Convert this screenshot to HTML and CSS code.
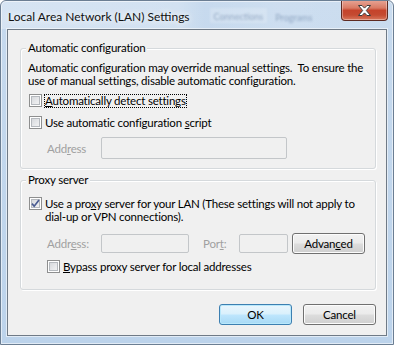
FILE: index.html
```html
<!DOCTYPE html>
<html>
<head>
<meta charset="utf-8">
<link rel="stylesheet" href="styles.css">
</head>
<body>
<div class="window">
  <div class="titlebar">
    <span class="title">Local Area Network (LAN) Settings</span>
    <span class="ghost ghost-1">Connections</span>
    <span class="ghost ghost-2">Programs</span>
    <span class="close">
      <svg width="15" height="11" viewBox="0 0 15 11"><path d="M1.5 0.5h3.5l2.5 2.6 2.5-2.6h3.5l-4.2 5 4.2 5h-3.5l-2.5-2.6-2.5 2.6h-3.5l4.2-5z" fill="#fff" stroke="#3b3b3b" stroke-width="1" stroke-linejoin="round"/></svg>
    </span>
  </div>
  <div class="client">
    <section class="group group-auto">
      <div class="legend">Automatic configuration</div>
      <p class="desc">Automatic configuration may override manual settings.&nbsp; To ensure the<br>use of manual settings, disable automatic configuration.</p>
      <div class="check-row row-1">
        <span class="cb"></span>
        <span class="cb-label focus"><u>A</u>utomatically detect settings</span>
      </div>
      <div class="check-row row-2">
        <span class="cb"></span>
        <span class="cb-label">Use automatic configuration <u>s</u>cript</span>
      </div>
      <div class="field-row field-auto">
        <span class="field-label">Add<u>r</u>ess</span>
        <span class="input input-url"></span>
      </div>
    </section>

    <section class="group group-proxy">
      <div class="legend">Proxy server</div>
      <div class="check-row row-proxy">
        <span class="cb checked">
          <svg width="9" height="9" viewBox="0 0 9 9"><path d="M1 4.6l2.2 2.6L8 1" fill="none" stroke="#4a5c92" stroke-width="1.7"/></svg>
        </span>
        <span class="cb-label two-line">Use a pro<u>x</u>y server for your LAN (These settings will not apply to<br>dial-up or VPN connections).</span>
      </div>
      <div class="field-row field-proxy">
        <span class="field-label">Addr<u>e</u>ss:</span>
        <span class="input input-addr"></span>
        <span class="field-label port-label">Por<u>t</u>:</span>
        <span class="input input-port"></span>
        <span class="btn btn-adv">Advan<u>c</u>ed</span>
      </div>
      <div class="check-row row-bypass">
        <span class="cb"></span>
        <span class="cb-label"><u>B</u>ypass proxy server for local addresses</span>
      </div>
    </section>

    <div class="buttons">
      <span class="btn btn-default">OK</span>
      <span class="btn">Cancel</span>
    </div>
  </div>
</div>
</body>
</html>
```

FILE: styles.css
```css
* { box-sizing: border-box; }

html, body {
  margin: 0;
  padding: 0;
  background: #ffffff;
}

body {
  font-family: "Lato", "Open Sans", sans-serif;
  font-size: 11.5px;
  letter-spacing: -0.2px;
  color: #000;
  white-space: nowrap;
}

u { text-decoration: underline; text-underline-offset: 1px; }

.window {
  width: 394px;
  height: 345px;
  display: flex;
  flex-direction: column;
  border: 1px solid #6b7e93;
  border-radius: 6px 6px 0 0;
  background: linear-gradient(to bottom, #c7daee 0%, #bcd3eb 100%);
  box-shadow: inset 0 0 0 1px rgba(255,255,255,0.55);
  overflow: hidden;
}

.titlebar {
  height: 28px;
  flex: none;
  display: flex;
  align-items: center;
  padding-left: 7px;
  background: linear-gradient(to right, rgba(255,255,255,0.28) 0%, rgba(255,255,255,0.2) 45%, rgba(255,255,255,0) 52%, rgba(255,255,255,0.12) 70%, rgba(255,255,255,0.05) 100%);
}

.title {
  color: #111;
  font-size: 12px;
  letter-spacing: 0;
  padding-top: 2px;
  text-shadow: 0 0 6px rgba(255,255,255,0.95), 0 0 10px rgba(255,255,255,0.8);
}

.ghost {
  color: rgba(70, 100, 140, 0.45);
  font-size: 9px;
  letter-spacing: 0;
  filter: blur(0.9px);
  padding-top: 4px;
}
.ghost-1 { margin-left: 20px; padding: 3px 4px 1px; background: rgba(255,255,255,0.18); }
.ghost-2 { margin-left: 8px; }

.close {
  margin-left: auto;
  margin-right: 5px;
  align-self: flex-start;
  margin-top: -1px;
  width: 47px;
  height: 21px;
  display: flex;
  align-items: center;
  justify-content: center;
  border: 1px solid #5d2a22;
  border-top: none;
  border-radius: 0 0 4px 4px;
  background: linear-gradient(to bottom, #e8a697 0%, #d97a64 40%, #c5432b 52%, #c44a31 75%, #d9775c 100%);
  box-shadow: inset 0 0 0 1px rgba(255,255,255,0.35);
}

.client {
  flex: 1;
  margin: 0 6px 8px;
  background: #f0f0f0;
  border: 1px solid #6f7a86;
  box-shadow: 0 0 0 1px rgba(255,255,255,0.55);
  padding: 18px 10px 0 12px;
  display: flex;
  flex-direction: column;
}

.group {
  border: 1px solid #d5d9dc;
  border-radius: 3px;
  box-shadow: inset 1px 1px 0 #fff, 1px 1px 0 #fff;
  padding: 0 7px;
}

.group-auto { padding-bottom: 9px; }
.group-proxy { margin-top: 11px; padding-bottom: 15px; }

.legend {
  width: fit-content;
  margin: -9px 0 0 -2px;
  padding: 0 2px;
  height: 15px;
  line-height: 15px;
  background: #f0f0f0;
}

.desc {
  margin: 6px 0 0;
  line-height: 13px;
}

.check-row {
  display: flex;
  align-items: center;
  height: 15px;
  line-height: 15px;
  padding-left: 1px;
}

.row-1 { margin-top: 6px; }
.row-2 { margin-top: 7px; }
.row-proxy { margin-top: 10px; align-items: flex-start; height: 26px; }
.row-bypass { margin-top: 5px; padding-left: 19px; }

.cb {
  flex: none;
  width: 13px;
  height: 13px;
  border: 1px solid #8e8f8f;
  background: linear-gradient(135deg, #cfd2d6 0%, #e9eaec 60%, #f6f6f6 100%);
  box-shadow: inset 0 0 0 1px #fff, inset 0 0 0 2px #b5b9be;
  display: flex;
  align-items: center;
  justify-content: center;
}

.cb-label {
  margin-left: 2px;
  padding: 0 1px;
}

.cb-label.focus {
  outline: 1px dotted #000;
  outline-offset: -1px;
  line-height: 14px;
}

.cb-label.two-line { line-height: 13px; }

.field-row {
  display: flex;
  align-items: center;
  padding-left: 19px;
}

.field-auto { margin-top: 7px; }
.field-proxy { margin-top: 10px; }

.field-label {
  width: 54px;
  flex: none;
  color: #a0a0a0;
}

.port-label { width: 36px; margin-left: 14px; }

.input {
  flex: none;
  display: block;
  border: 1px solid #c3c6c9;
  border-radius: 2px;
  background: #f0f0f0;
}

.input-url { width: 186px; height: 22px; }
.input-addr { width: 88px; height: 19px; }
.input-port { width: 49px; height: 19px; }

.btn {
  flex: none;
  width: 73px;
  height: 21px;
  display: flex;
  align-items: center;
  justify-content: center;
  border: 1px solid #707070;
  border-radius: 3px;
  background: linear-gradient(to bottom, #f2f2f2 0%, #ebebeb 48%, #dddddd 52%, #cfcfcf 100%);
  box-shadow: inset 0 0 0 1px #fcfcfc;
  color: #000;
}

.btn-adv { margin-left: 4px; }

.buttons {
  display: flex;
  justify-content: flex-end;
  gap: 11px;
  margin-top: 14px;
}

.btn-default {
  border-color: #3c7fb1;
  background: linear-gradient(to bottom, #eaf6fd 0%, #d9f0fc 48%, #bee6fd 52%, #a7d9f5 100%);
  box-shadow: inset 0 0 0 1px #b9e8fb;
}
```
